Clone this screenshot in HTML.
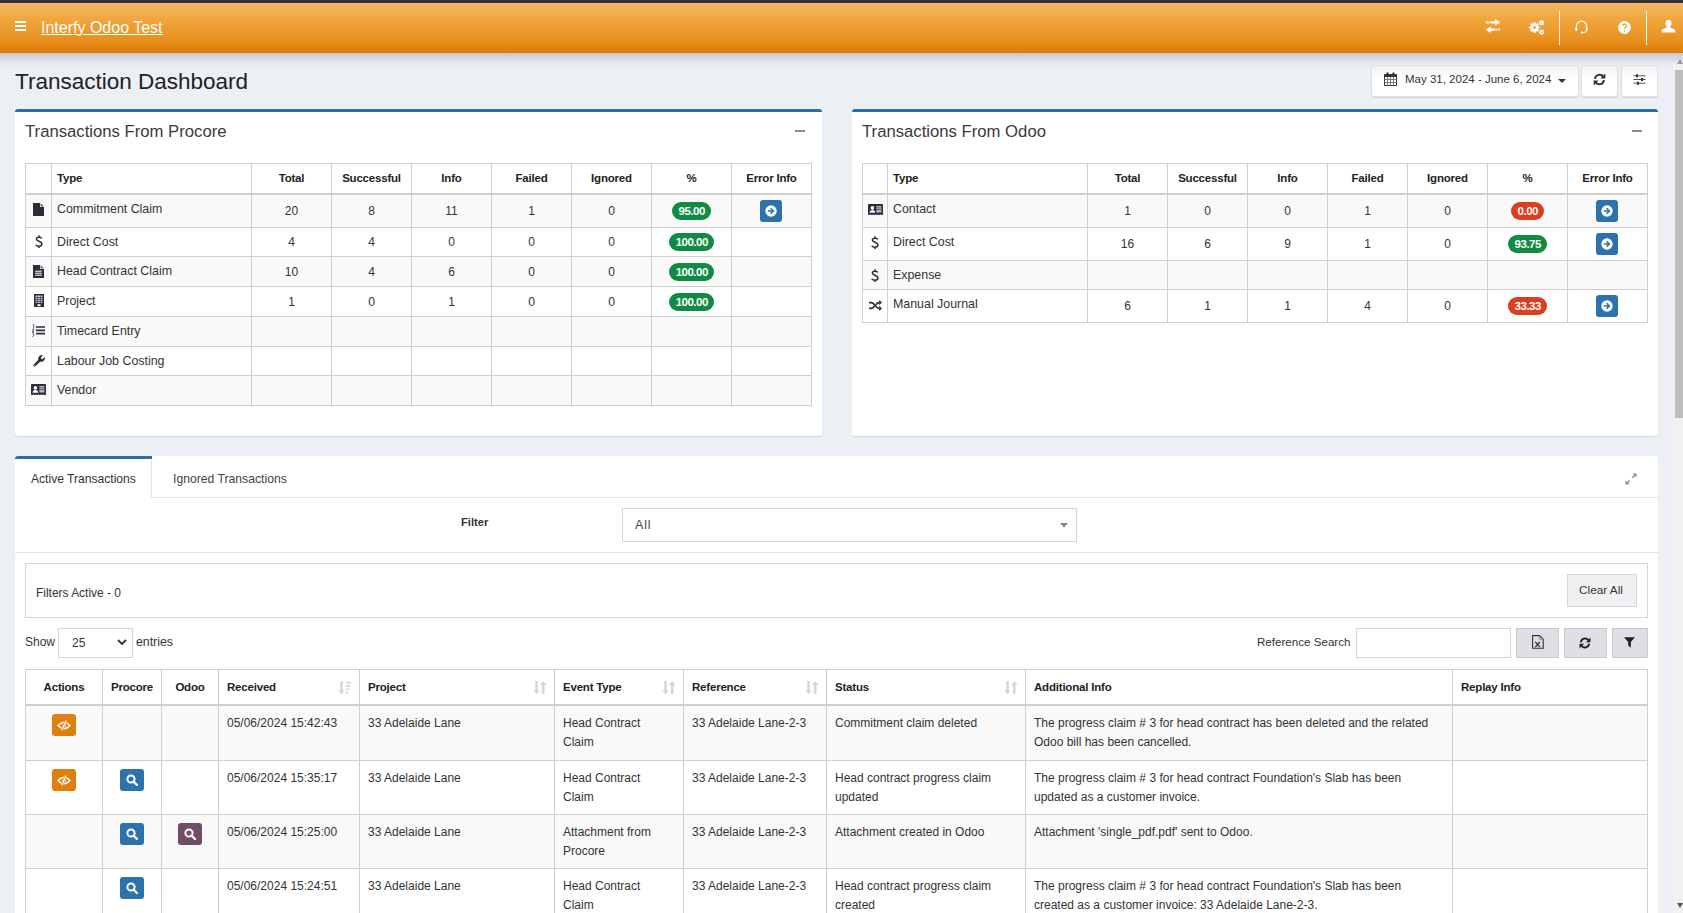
<!DOCTYPE html>
<html><head><meta charset="utf-8">
<style>
*{box-sizing:border-box;margin:0;padding:0}
html,body{width:1683px;height:913px;overflow:hidden;background:#ecf0f5;font-family:"Liberation Sans",sans-serif;color:#333;font-size:12px}
.abs{position:absolute}
#topline{left:0;top:0;width:1683px;height:3px;background:#2f313b}
#hdr{left:0;top:3px;width:1683px;height:50px;background:linear-gradient(#f6b862,#f0a53c 35%,#e88f1e 75%,#de7c06 100%)}
#shadow{left:0;top:53px;width:1683px;height:16px;background:linear-gradient(#c4c9d1,#d3d7de 30%,#e6e9ef 65%,#ecf0f5)}
.brand{left:41px;top:19px;font-size:16px;color:#fff;text-decoration:underline;text-underline-offset:1px}
.hv{top:11px;width:1px;height:34px;background:#fff}
svg{display:block}
.title{left:15px;top:69px;font-size:22.5px;color:#222;white-space:nowrap}
.dbtn{background:linear-gradient(#f2f2f2,#fff 45%);border:1px solid #e0e0e0;border-radius:3px;box-shadow:0 1px 1px rgba(0,0,0,.12)}
.box{background:#fff;border-top:3px solid #2a6ea9;border-radius:3px;box-shadow:0 1px 1px rgba(0,0,0,.1)}
.boxt{font-size:16.7px;color:#3a3a3a;white-space:nowrap}
table{border-collapse:separate;border-spacing:0;table-layout:fixed}
.t1{border-top:1px solid #cfcfcf;border-left:1px solid #cfcfcf}
.t1 td,.t1 th{border-right:1px solid #cfcfcf;border-bottom:1px solid #cfcfcf;white-space:nowrap;overflow:hidden;font-size:12px}
.t1 th{font-weight:700;font-size:11.5px;letter-spacing:-0.2px;padding-bottom:1px;border-bottom:2px solid #cfcfcf;color:#222;text-align:center}
.t1 tr.o td{background:#f9f9f9}
.t1 td.c{text-align:center}
.t1 td.ty{padding-left:5px;font-size:12.4px;vertical-align:top;padding-top:7px}
.t1 td.ic{text-align:center;vertical-align:top}

.badge{display:inline-block;color:#fff;font-weight:700;font-size:11.5px;line-height:18px;height:18px;border-radius:9px;padding:0 6.5px 0 7px;letter-spacing:-.5px;vertical-align:middle}
.bg{background:#118a44}
.br{background:#dc3c1f}
.bb{display:block;margin:0 auto;width:22px;height:22px;border-radius:3px;background:#2c72ad;position:relative;left:-1px}

.tabbox{left:15px;top:456px;width:1643px;height:470px;background:#fff;border-radius:3px 3px 0 0}
.t2{border-top:1px solid #cfcfcf;border-left:1px solid #cfcfcf}
.t2 td,.t2 th{border-right:1px solid #cfcfcf;border-bottom:1px solid #cfcfcf;font-size:12px;vertical-align:top;text-align:left}
.t2 th{font-weight:700;font-size:11.5px;letter-spacing:-0.2px;padding-bottom:1px;border-bottom:2px solid #cfcfcf;color:#222;vertical-align:middle;padding-left:8px;position:relative}
.t2 td{padding:8px 8px 0 8px;line-height:18.5px;color:#333}
.t2 tr.o td{background:#f9f9f9}
.t2 td.bc{padding-top:8px;padding-left:0;padding-right:0}
.ab{display:block;margin:0 auto;width:24px;height:22px;border-radius:3px;position:relative}
.ab.or{background:#dd800f}.ab.bl{background:#2c72ad}.ab.pu{background:#704d68}
.sort{position:absolute;right:7px;top:11px}
.gbtn{background:#dedfe3;border:1px solid #c9cace}
</style></head><body>
<div id="topline" class="abs"></div>
<div id="hdr" class="abs"></div>
<div id="shadow" class="abs"></div>
<!-- hamburger -->
<div class="abs" style="left:15px;top:21px;width:11px;height:10px">
 <div style="height:2px;background:#fff;margin-bottom:2px"></div>
 <div style="height:2px;background:#fff;margin-bottom:2px"></div>
 <div style="height:2px;background:#fff"></div>
</div>
<div class="abs brand">Interfy Odoo Test</div>

<!-- header icons -->
<svg class="abs" style="left:1485px;top:19px" width="16" height="14" viewBox="0 0 16 14">
 <path d="M1 3.3h1.6M3.6 3.3h1.2M5.6 3.3h5.4" stroke="#fff" stroke-width="2.2"/><path d="M10.3 0L15.2 3.3L10.3 6.6z" fill="#fff"/>
 <path d="M15 10.7h-1.6M12.4 10.7h-1.2M10.4 10.7h-5.4" stroke="#fff" stroke-width="2.2"/><path d="M5.7 7.4L0.8 10.7L5.7 14z" fill="#fff"/>
</svg>
<svg class="abs" style="left:1529px;top:20px" width="16" height="15" viewBox="0 0 16 15">
 <g fill="#fff">
 <circle cx="5.5" cy="7.5" r="3.9"/>
 <g stroke="#fff" stroke-width="2.2"><path d="M5.5 2.2v10.6M0.2 7.5h10.6M1.75 3.75l7.5 7.5M9.25 3.75l-7.5 7.5"/></g>
 <circle cx="12.6" cy="2.8" r="2"/><circle cx="12.6" cy="12.2" r="2"/>
 <g stroke="#fff" stroke-width="1.1"><path d="M12.6 0v5.6M9.8 2.8h5.6M10.6 0.8l4 4M14.6 0.8l-4 4M12.6 9.4v5.6M9.8 12.2h5.6M10.6 10.2l4 4M14.6 10.2l-4 4"/></g>
 </g>
 <circle cx="5.5" cy="7.5" r="1.4" fill="#ee9c30"/>
 <circle cx="12.6" cy="2.8" r="0.7" fill="#f2a640"/><circle cx="12.6" cy="12.2" r="0.7" fill="#e98e1c"/>
</svg>
<div class="abs hv" style="left:1559px"></div>
<svg class="abs" style="left:1575px;top:20px" width="13" height="14" viewBox="0 0 13 14">
 <path d="M1.4 8.5V6.2a5.1 5.1 0 0 1 10.2 0V8.5" stroke="#fff" stroke-width="1.2" fill="none"/>
 <rect x="0.3" y="7" width="2" height="3.8" rx="0.9" fill="#fff"/><rect x="10.7" y="7" width="2" height="3.8" rx="0.9" fill="#fff"/>
 <path d="M11.6 10.6q0 1.9-3.6 2" stroke="#fff" stroke-width="1" fill="none"/><circle cx="7" cy="12.6" r="1.2" fill="#fff"/>
</svg>
<svg class="abs" style="left:1618px;top:21px" width="13" height="13" viewBox="0 0 13 13">
 <circle cx="6.5" cy="6.5" r="6.4" fill="#fff"/>
 <path d="M4.6 4.9a1.9 1.8 0 1 1 2.7 1.7c-.6.3-.8.6-.8 1.2v.3" stroke="#efa23a" stroke-width="1.3" fill="none"/>
 <rect x="5.8" y="9" width="1.5" height="1.5" fill="#efa23a"/>
</svg>
<div class="abs hv" style="left:1646px"></div>
<svg class="abs" style="left:1661px;top:19px" width="15" height="14" viewBox="0 0 15 14">
 <path d="M7.5 0.8c1.9 0 3 1.5 3 3.5 0 1.5-.6 2.8-1.4 3.5v.8c1.8.6 4.6 1.4 5.2 3v1.8H0.7v-1.8c.6-1.6 3.4-2.4 5.2-3v-.8C5.1 7.1 4.5 5.8 4.5 4.3c0-2 1.1-3.5 3-3.5z" fill="#fff"/>
</svg>

<div class="abs title">Transaction Dashboard</div>

<!-- date buttons -->
<div class="abs dbtn" style="left:1371px;top:65px;width:208px;height:32px"></div>
<svg class="abs" style="left:1384px;top:72px" width="13" height="14" viewBox="0 0 13 14">
 <path d="M0.5 2.5h12v11h-12z" fill="#fff" stroke="#333" stroke-width="1"/>
 <rect x="0.5" y="2.5" width="12" height="2.5" fill="#333"/>
 <path d="M0.5 7.5h12M0.5 10.5h12M3.5 5v8.5M6.5 5v8.5M9.5 5v8.5" stroke="#777" stroke-width="1"/>
 <rect x="2.5" y="0.5" width="2" height="3" fill="#333"/><rect x="8.5" y="0.5" width="2" height="3" fill="#333"/>
</svg>
<div class="abs" style="left:1405px;top:73px;font-size:11.5px;color:#333;white-space:nowrap">May 31, 2024 - June 6, 2024</div>
<svg class="abs" style="left:1558px;top:79px" width="8" height="4" viewBox="0 0 8 4"><path d="M0 0h8L4 4z" fill="#333"/></svg>
<div class="abs dbtn" style="left:1581px;top:65px;width:37px;height:32px"></div>
<svg class="abs" style="left:1593px;top:73px" width="13" height="13" viewBox="0 0 13 13">
 <path d="M2 5.8A4.6 4.6 0 0 1 10.3 3.6" stroke="#333" stroke-width="2" fill="none"/><path d="M12.4 0.6v5h-5z" fill="#333"/>
 <path d="M11 7.2A4.6 4.6 0 0 1 2.7 9.4" stroke="#333" stroke-width="2" fill="none"/><path d="M0.6 12.4v-5h5z" fill="#333"/>
</svg>
<div class="abs dbtn" style="left:1621px;top:65px;width:37px;height:32px"></div>
<svg class="abs" style="left:1633px;top:74px" width="13" height="11" viewBox="0 0 13 11">
 <path d="M0.5 1.8h12M0.5 5.5h12M0.5 9.2h12" stroke="#555" stroke-width="1"/>
 <rect x="3" y="0.3" width="2" height="3" fill="#333"/><rect x="8" y="4" width="2" height="3" fill="#333"/><rect x="4" y="7.7" width="2" height="3" fill="#333"/>
</svg>

<div class="abs box" style="left:15px;top:109px;width:807px;height:327px"></div>
<div class="abs boxt" style="left:25px;top:122px">Transactions From Procore</div>
<div class="abs" style="left:795px;top:130px;width:10px;height:2px;background:#8e8d84"></div>
<div class="abs box" style="left:852px;top:109px;width:806px;height:327px"></div>
<div class="abs boxt" style="left:862px;top:122px">Transactions From Odoo</div>
<div class="abs" style="left:1632px;top:130px;width:10px;height:2px;background:#8e8d84"></div>
<table class="abs t1" style="left:25px;top:163px;width:787px"><colgroup><col style="width:26px"><col style="width:200px"><col style="width:80px"><col style="width:80px"><col style="width:80px"><col style="width:80px"><col style="width:80px"><col style="width:80px"><col style="width:80px"></colgroup><tr style="height:31px"><th></th><th style="text-align:left;padding-left:5px">Type</th><th>Total</th><th>Successful</th><th>Info</th><th>Failed</th><th>Ignored</th><th>%</th><th>Error Info</th></tr><tr class="o" style="height:33px"><td class="ic"><svg style="margin:8px auto 0" width="11" height="13" viewBox="0 0 11 13"><path d="M0 0h7v4h4v9H0z" fill="#2b2e38"/><path d="M7.6 0L11 3.4H7.6z" fill="#666"/></svg></td><td class="ty">Commitment Claim</td><td class="c">20</td><td class="c">8</td><td class="c">11</td><td class="c">1</td><td class="c">0</td><td class="c"><span class="badge bg">95.00</span></td><td class="c"><span class="bb"><svg class="abs" style="left:5px;top:5px" width="12" height="12" viewBox="0 0 12 12"><circle cx="6" cy="6" r="5.7" fill="#fff"/><path d="M2.8 6h5.2M5.6 3.2L8.4 6 5.6 8.8" stroke="#2c72ad" stroke-width="1.6" fill="none"/></svg></span></td></tr><tr style="height:29px"><td class="ic"><svg style="margin:7px auto 0" width="8" height="13" viewBox="0 0 8 13"><path d="M6.9 3.4C6.4 2.6 5.4 2.2 4.1 2.2 2.5 2.2 1.4 2.9 1.4 4.1c0 2.8 5.5 1.6 5.5 5 0 1.3-1.2 2.2-3 2.2-1.4 0-2.6-.6-3.2-1.5M4 0.3v1.9M4 11.1v1.9" stroke="#2b2e38" stroke-width="1.5" fill="none"/></svg></td><td class="ty">Direct Cost</td><td class="c">4</td><td class="c">4</td><td class="c">0</td><td class="c">0</td><td class="c">0</td><td class="c"><span class="badge bg">100.00</span></td><td class="c"></td></tr><tr class="o" style="height:30px"><td class="ic"><svg style="margin:8px auto 0" width="11" height="13" viewBox="0 0 11 13"><path d="M0 0h7v4h4v9H0z" fill="#2b2e38"/><path d="M7.6 0L11 3.4H7.6z" fill="#666"/><path d="M2.2 6.2h6.6M2.2 8.2h6.6M2.2 10.2h6.6" stroke="#fff" stroke-width="1"/></svg></td><td class="ty">Head Contract Claim</td><td class="c">10</td><td class="c">4</td><td class="c">6</td><td class="c">0</td><td class="c">0</td><td class="c"><span class="badge bg">100.00</span></td><td class="c"></td></tr><tr style="height:30px"><td class="ic"><svg style="margin:7px auto 0" width="10" height="13" viewBox="0 0 10 13"><rect x="0" y="0" width="10" height="13" fill="#2b2e38"/><g fill="#cfd3da"><rect x="1.5" y="1.5" width="2" height="7.5"/><rect x="4" y="1.5" width="2" height="7.5"/><rect x="6.5" y="1.5" width="2" height="7.5"/></g><g fill="#2b2e38"><rect x="1" y="3.3" width="8" height="0.8"/><rect x="1" y="5.3" width="8" height="0.8"/><rect x="1" y="7.3" width="8" height="0.8"/></g><rect x="3.5" y="10.2" width="3" height="2" fill="#fff"/></svg></td><td class="ty">Project</td><td class="c">1</td><td class="c">0</td><td class="c">1</td><td class="c">0</td><td class="c">0</td><td class="c"><span class="badge bg">100.00</span></td><td class="c"></td></tr><tr class="o" style="height:30px"><td class="ic"><svg style="margin:7px auto 0" width="13" height="13" viewBox="0 0 13 13"><path d="M4 3h9M4 6.3h9M4 9.6h9" stroke="#2b2e38" stroke-width="1.7"/><path d="M0.8 0.8h1v3.4M0.3 5.2h1.6l-1.6 2.2h1.8M0.3 8.6h1.6l-1 1.3 1 1.4-1 1.2H0.3" stroke="#2b2e38" stroke-width="0.75" fill="none"/></svg></td><td class="ty">Timecard Entry</td><td class="c"></td><td class="c"></td><td class="c"></td><td class="c"></td><td class="c"></td><td class="c"></td><td class="c"></td></tr><tr style="height:29px"><td class="ic"><svg style="margin:8px auto 0" width="12" height="12" viewBox="0 0 12 12"><path d="M1.6 10.4L6.6 5.4" stroke="#2b2e38" stroke-width="2.6" stroke-linecap="round"/><path d="M5.2 4.4a3.7 3.7 0 0 1 4.8-4.1L7.8 2.5l.4 1.3 1.3.4 2.2-2.2a3.7 3.7 0 0 1-4.1 4.8z" fill="#2b2e38"/><circle cx="1.8" cy="10.2" r="0.6" fill="#fff"/></svg></td><td class="ty">Labour Job Costing</td><td class="c"></td><td class="c"></td><td class="c"></td><td class="c"></td><td class="c"></td><td class="c"></td><td class="c"></td></tr><tr class="o" style="height:30px"><td class="ic"><svg style="margin:8px auto 0" width="15" height="11" viewBox="0 0 15 11"><rect x="0" y="0" width="15" height="11" rx="0.8" fill="#2b2e38"/><circle cx="4.4" cy="3.9" r="1.8" fill="#fff"/><path d="M1.6 8.8c0-1.8 1.1-2.8 2.8-2.8s2.8 1 2.8 2.8z" fill="#fff"/><rect x="8.4" y="2" width="5" height="6.5" fill="#b9bcc3"/><path d="M8.4 3.8h5M8.4 5.6h5" stroke="#2b2e38" stroke-width="0.7"/><path d="M2 10.5h11" stroke="#fff" stroke-width="0.5" stroke-dasharray="1 1.5"/></svg></td><td class="ty">Vendor</td><td class="c"></td><td class="c"></td><td class="c"></td><td class="c"></td><td class="c"></td><td class="c"></td><td class="c"></td></tr></table><table class="abs t1" style="left:862px;top:163px;width:786px"><colgroup><col style="width:25px"><col style="width:200px"><col style="width:80px"><col style="width:80px"><col style="width:80px"><col style="width:80px"><col style="width:80px"><col style="width:80px"><col style="width:80px"></colgroup><tr style="height:31px"><th></th><th style="text-align:left;padding-left:5px">Type</th><th>Total</th><th>Successful</th><th>Info</th><th>Failed</th><th>Ignored</th><th>%</th><th>Error Info</th></tr><tr class="o" style="height:33px"><td class="ic"><svg style="margin:9px auto 0" width="15" height="11" viewBox="0 0 15 11"><rect x="0" y="0" width="15" height="11" rx="0.8" fill="#2b2e38"/><circle cx="4.4" cy="3.9" r="1.8" fill="#fff"/><path d="M1.6 8.8c0-1.8 1.1-2.8 2.8-2.8s2.8 1 2.8 2.8z" fill="#fff"/><rect x="8.4" y="2" width="5" height="6.5" fill="#b9bcc3"/><path d="M8.4 3.8h5M8.4 5.6h5" stroke="#2b2e38" stroke-width="0.7"/><path d="M2 10.5h11" stroke="#fff" stroke-width="0.5" stroke-dasharray="1 1.5"/></svg></td><td class="ty">Contact</td><td class="c">1</td><td class="c">0</td><td class="c">0</td><td class="c">1</td><td class="c">0</td><td class="c"><span class="badge br">0.00</span></td><td class="c"><span class="bb"><svg class="abs" style="left:5px;top:5px" width="12" height="12" viewBox="0 0 12 12"><circle cx="6" cy="6" r="5.7" fill="#fff"/><path d="M2.8 6h5.2M5.6 3.2L8.4 6 5.6 8.8" stroke="#2c72ad" stroke-width="1.6" fill="none"/></svg></span></td></tr><tr style="height:33px"><td class="ic"><svg style="margin:8px auto 0" width="8" height="13" viewBox="0 0 8 13"><path d="M6.9 3.4C6.4 2.6 5.4 2.2 4.1 2.2 2.5 2.2 1.4 2.9 1.4 4.1c0 2.8 5.5 1.6 5.5 5 0 1.3-1.2 2.2-3 2.2-1.4 0-2.6-.6-3.2-1.5M4 0.3v1.9M4 11.1v1.9" stroke="#2b2e38" stroke-width="1.5" fill="none"/></svg></td><td class="ty">Direct Cost</td><td class="c">16</td><td class="c">6</td><td class="c">9</td><td class="c">1</td><td class="c">0</td><td class="c"><span class="badge bg">93.75</span></td><td class="c"><span class="bb"><svg class="abs" style="left:5px;top:5px" width="12" height="12" viewBox="0 0 12 12"><circle cx="6" cy="6" r="5.7" fill="#fff"/><path d="M2.8 6h5.2M5.6 3.2L8.4 6 5.6 8.8" stroke="#2c72ad" stroke-width="1.6" fill="none"/></svg></span></td></tr><tr class="o" style="height:29px"><td class="ic"><svg style="margin:8px auto 0" width="8" height="13" viewBox="0 0 8 13"><path d="M6.9 3.4C6.4 2.6 5.4 2.2 4.1 2.2 2.5 2.2 1.4 2.9 1.4 4.1c0 2.8 5.5 1.6 5.5 5 0 1.3-1.2 2.2-3 2.2-1.4 0-2.6-.6-3.2-1.5M4 0.3v1.9M4 11.1v1.9" stroke="#2b2e38" stroke-width="1.5" fill="none"/></svg></td><td class="ty">Expense</td><td class="c"></td><td class="c"></td><td class="c"></td><td class="c"></td><td class="c"></td><td class="c"></td><td class="c"></td></tr><tr style="height:33px"><td class="ic"><svg style="margin:10px auto 0" width="13" height="11" viewBox="0 0 13 11"><path d="M0 2.6h2.3c3.3 0 4.3 5.8 7.6 5.8h0.8M0 8.4h2.3c1.4 0 2.3-1 3-2.1M7 4.7c.7-1.1 1.6-2.1 3-2.1h0.7" stroke="#2b2e38" stroke-width="1.7" fill="none"/><path d="M10.2 0l2.8 2.6-2.8 2.6zM10.2 5.8l2.8 2.6-2.8 2.6z" fill="#2b2e38"/></svg></td><td class="ty">Manual Journal</td><td class="c">6</td><td class="c">1</td><td class="c">1</td><td class="c">4</td><td class="c">0</td><td class="c"><span class="badge br">33.33</span></td><td class="c"><span class="bb"><svg class="abs" style="left:5px;top:5px" width="12" height="12" viewBox="0 0 12 12"><circle cx="6" cy="6" r="5.7" fill="#fff"/><path d="M2.8 6h5.2M5.6 3.2L8.4 6 5.6 8.8" stroke="#2c72ad" stroke-width="1.6" fill="none"/></svg></span></td></tr></table>

<div class="abs tabbox"></div>
<div class="abs" style="left:15px;top:456px;width:137px;height:3px;background:#2a6ea9;border-radius:3px 0 0 0"></div>
<div class="abs" style="left:152px;top:497px;width:1506px;height:1px;background:#e3e3e6"></div>
<div class="abs" style="left:151px;top:459px;width:1px;height:39px;background:#e3e3e6"></div>
<div class="abs" style="left:31px;top:472px;font-size:12.1px;color:#333;white-space:nowrap">Active Transactions</div>
<div class="abs" style="left:173px;top:472px;font-size:12.2px;color:#444;white-space:nowrap">Ignored Transactions</div>
<svg class="abs" style="left:1625px;top:473px" width="12" height="12" viewBox="0 0 12 12"><path d="M7.5 0.5h4v4zM0.5 7.5v4h4z" fill="#8e8c7e"/><path d="M9.8 2.2L7.2 4.8M2.2 9.8L4.8 7.2" stroke="#8e8c7e" stroke-width="1.4"/></svg>
<div class="abs" style="left:461px;top:516px;font-size:11.2px;font-weight:700;color:#333">Filter</div>
<div class="abs" style="left:622px;top:508px;width:455px;height:34px;border:1px solid #d2d6de;background:#fff"></div>
<div class="abs" style="left:635px;top:518px;font-size:12.5px;letter-spacing:0.8px;color:#444">All</div>
<svg class="abs" style="left:1060px;top:523px" width="8" height="5" viewBox="0 0 8 5"><path d="M0 0h8L4 4.5z" fill="#888"/></svg>
<div class="abs" style="left:15px;top:552px;width:1643px;height:1px;background:#e3e3e6"></div>
<div class="abs" style="left:25px;top:563px;width:623px;height:55px;border:1px solid #d2d6de;width:1623px"></div>
<div class="abs" style="left:36px;top:586px;font-size:11.95px;color:#333;white-space:nowrap">Filters Active - 0</div>
<div class="abs gbtn" style="left:1567px;top:574px;width:70px;height:33px;background:#f0f0f2;border-color:#d2d6de"></div>
<div class="abs" style="left:1579px;top:583px;font-size:11.8px;color:#333;white-space:nowrap">Clear All</div>
<div class="abs" style="left:25px;top:635px;font-size:12px;color:#333">Show</div>
<div class="abs" style="left:58px;top:628px;width:75px;height:30px;border:1px solid #d2d6de;background:#fff"></div>
<div class="abs" style="left:72px;top:636px;font-size:12px;color:#333">25</div>
<svg class="abs" style="left:117px;top:639px" width="10" height="7" viewBox="0 0 10 7"><path d="M1 1l4 4 4-4" stroke="#333" stroke-width="1.8" fill="none"/></svg>
<div class="abs" style="left:136px;top:635px;font-size:12.3px;color:#333">entries</div>
<div class="abs" style="left:1257px;top:635px;font-size:11.6px;color:#333;white-space:nowrap">Reference Search</div>
<div class="abs" style="left:1356px;top:628px;width:155px;height:30px;border:1px solid #d2d6de;background:#fff"></div>
<div class="abs gbtn" style="left:1516px;top:628px;width:43px;height:30px"></div>
<svg class="abs" style="left:1532px;top:635px" width="12" height="14" viewBox="0 0 12 14"><path d="M0.6 0.6h7l3.6 3.6v9.1H0.6z" fill="none" stroke="#333" stroke-width="1.1"/><path d="M7.4 0.6v3.7h3.8" fill="none" stroke="#888" stroke-width="0.9"/><path d="M3.3 6.8l4.6 5.4M7.9 6.8L3.3 12.2" stroke="#2b2e38" stroke-width="1.3"/></svg>
<div class="abs gbtn" style="left:1564px;top:628px;width:43px;height:30px"></div>
<svg class="abs" style="left:1579px;top:637px" width="12" height="12" viewBox="0 0 13 13"><path d="M2 5.8A4.6 4.6 0 0 1 10.3 3.6" stroke="#222" stroke-width="2" fill="none"/><path d="M12.4 0.6v5h-5z" fill="#222"/><path d="M11 7.2A4.6 4.6 0 0 1 2.7 9.4" stroke="#222" stroke-width="2" fill="none"/><path d="M0.6 12.4v-5h5z" fill="#222"/></svg>
<div class="abs gbtn" style="left:1612px;top:628px;width:36px;height:30px"></div>
<svg class="abs" style="left:1624px;top:637px" width="11" height="11" viewBox="0 0 11 11"><path d="M0 0.3h11L6.8 5v5.7L4.2 8.6V5z" fill="#222"/></svg>
<table class="abs t2" style="left:25px;top:669px;width:1623px"><colgroup><col style="width:77px"><col style="width:59px"><col style="width:57px"><col style="width:141px"><col style="width:195px"><col style="width:129px"><col style="width:143px"><col style="width:199px"><col style="width:427px"><col style="width:195px"></colgroup><tr style="height:36px"><th style="text-align:center;padding-left:0">Actions</th><th style="text-align:center;padding-left:0">Procore</th><th style="text-align:center;padding-left:0">Odoo</th><th>Received<svg class="sort" width="14" height="14" viewBox="0 0 14 14"><path d="M3.5 0v10" stroke="#d3d7de" stroke-width="2.6"/><path d="M0.2 9.3h6.6L3.5 13.2z" fill="#d3d7de"/><path d="M7.8 1.6h5.6M7.8 5h4.6M7.8 8.4h3.6M7.8 11.8h2.4" stroke="#d3d7de" stroke-width="1.9"/></svg></th><th>Project<svg class="sort" width="14" height="14" viewBox="0 0 14 14"><path d="M3.5 0v10" stroke="#d3d7de" stroke-width="2.6"/><path d="M0.2 9.3h6.6L3.5 13.2z" fill="#d3d7de"/><path d="M10.2 3.5V13" stroke="#d3d7de" stroke-width="2.6"/><path d="M6.9 3.9h6.6L10.2 0z" fill="#d3d7de"/></svg></th><th>Event Type<svg class="sort" width="14" height="14" viewBox="0 0 14 14"><path d="M3.5 0v10" stroke="#d3d7de" stroke-width="2.6"/><path d="M0.2 9.3h6.6L3.5 13.2z" fill="#d3d7de"/><path d="M10.2 3.5V13" stroke="#d3d7de" stroke-width="2.6"/><path d="M6.9 3.9h6.6L10.2 0z" fill="#d3d7de"/></svg></th><th>Reference<svg class="sort" width="14" height="14" viewBox="0 0 14 14"><path d="M3.5 0v10" stroke="#d3d7de" stroke-width="2.6"/><path d="M0.2 9.3h6.6L3.5 13.2z" fill="#d3d7de"/><path d="M10.2 3.5V13" stroke="#d3d7de" stroke-width="2.6"/><path d="M6.9 3.9h6.6L10.2 0z" fill="#d3d7de"/></svg></th><th>Status<svg class="sort" width="14" height="14" viewBox="0 0 14 14"><path d="M3.5 0v10" stroke="#d3d7de" stroke-width="2.6"/><path d="M0.2 9.3h6.6L3.5 13.2z" fill="#d3d7de"/><path d="M10.2 3.5V13" stroke="#d3d7de" stroke-width="2.6"/><path d="M6.9 3.9h6.6L10.2 0z" fill="#d3d7de"/></svg></th><th>Additional Info</th><th>Replay Info</th></tr><tr class="o" style="height:55px"><td class="bc"><span class="ab or"><svg class="abs" style="left:5px;top:6px" width="14" height="11" viewBox="0 0 14 11"><path d="M1 5.5Q7 -1 13 5.5Q7 12 1 5.5z" fill="none" stroke="#fff" stroke-width="1.6"/><circle cx="7" cy="5.5" r="1.9" fill="#fff"/><path d="M9.2 0.3L4.6 10.5" stroke="#dd800f" stroke-width="2.4"/><path d="M9 0.5L4.8 10.3" stroke="#fff" stroke-width="1.2"/></svg></span></td><td class="bc"></td><td class="bc"></td><td>05/06/2024 15:42:43</td><td>33 Adelaide Lane</td><td>Head Contract<br>Claim</td><td>33 Adelaide Lane-2-3</td><td>Commitment claim deleted</td><td>The progress claim # 3 for head contract has been deleted and the related<br>Odoo bill has been cancelled.</td><td></td></tr><tr style="height:54px"><td class="bc"><span class="ab or"><svg class="abs" style="left:5px;top:6px" width="14" height="11" viewBox="0 0 14 11"><path d="M1 5.5Q7 -1 13 5.5Q7 12 1 5.5z" fill="none" stroke="#fff" stroke-width="1.6"/><circle cx="7" cy="5.5" r="1.9" fill="#fff"/><path d="M9.2 0.3L4.6 10.5" stroke="#dd800f" stroke-width="2.4"/><path d="M9 0.5L4.8 10.3" stroke="#fff" stroke-width="1.2"/></svg></span></td><td class="bc"><span class="ab bl"><svg class="abs" style="left:6px;top:5px" width="12" height="12" viewBox="0 0 12 12"><circle cx="5" cy="5" r="3.6" stroke="#fff" stroke-width="2" fill="none"/><path d="M7.5 7.5L11 11" stroke="#fff" stroke-width="2.3" stroke-linecap="round"/></svg></span></td><td class="bc"></td><td>05/06/2024 15:35:17</td><td>33 Adelaide Lane</td><td>Head Contract<br>Claim</td><td>33 Adelaide Lane-2-3</td><td>Head contract progress claim<br>updated</td><td>The progress claim # 3 for head contract Foundation's Slab has been<br>updated as a customer invoice.</td><td></td></tr><tr class="o" style="height:54px"><td class="bc"></td><td class="bc"><span class="ab bl"><svg class="abs" style="left:6px;top:5px" width="12" height="12" viewBox="0 0 12 12"><circle cx="5" cy="5" r="3.6" stroke="#fff" stroke-width="2" fill="none"/><path d="M7.5 7.5L11 11" stroke="#fff" stroke-width="2.3" stroke-linecap="round"/></svg></span></td><td class="bc"><span class="ab pu"><svg class="abs" style="left:6px;top:5px" width="12" height="12" viewBox="0 0 12 12"><circle cx="5" cy="5" r="3.6" stroke="#fff" stroke-width="2" fill="none"/><path d="M7.5 7.5L11 11" stroke="#fff" stroke-width="2.3" stroke-linecap="round"/></svg></span></td><td>05/06/2024 15:25:00</td><td>33 Adelaide Lane</td><td>Attachment from<br>Procore</td><td>33 Adelaide Lane-2-3</td><td>Attachment created in Odoo</td><td>Attachment 'single_pdf.pdf' sent to Odoo.</td><td></td></tr><tr style="height:60px"><td class="bc"></td><td class="bc"><span class="ab bl"><svg class="abs" style="left:6px;top:5px" width="12" height="12" viewBox="0 0 12 12"><circle cx="5" cy="5" r="3.6" stroke="#fff" stroke-width="2" fill="none"/><path d="M7.5 7.5L11 11" stroke="#fff" stroke-width="2.3" stroke-linecap="round"/></svg></span></td><td class="bc"></td><td>05/06/2024 15:24:51</td><td>33 Adelaide Lane</td><td>Head Contract<br>Claim</td><td>33 Adelaide Lane-2-3</td><td>Head contract progress claim<br>created</td><td>The progress claim # 3 for head contract Foundation's Slab has been<br>created as a customer invoice: 33 Adelaide Lane-2-3.</td><td></td></tr></table>
<!-- scrollbar -->
<div class="abs" style="left:1673px;top:64px;width:10px;height:849px;background:#f1f1f1"></div>
<div class="abs" style="left:1675px;top:70px;width:8px;height:348px;background:#bebebe"></div>
<svg class="abs" style="left:1677px;top:59px" width="6" height="5" viewBox="0 0 6 5"><path d="M3 0L6 5H0z" fill="#9a9a8e"/></svg>
<svg class="abs" style="left:1677px;top:903px" width="6" height="5" viewBox="0 0 6 5"><path d="M0 0h6L3 5z" fill="#555"/></svg>

</body></html>
